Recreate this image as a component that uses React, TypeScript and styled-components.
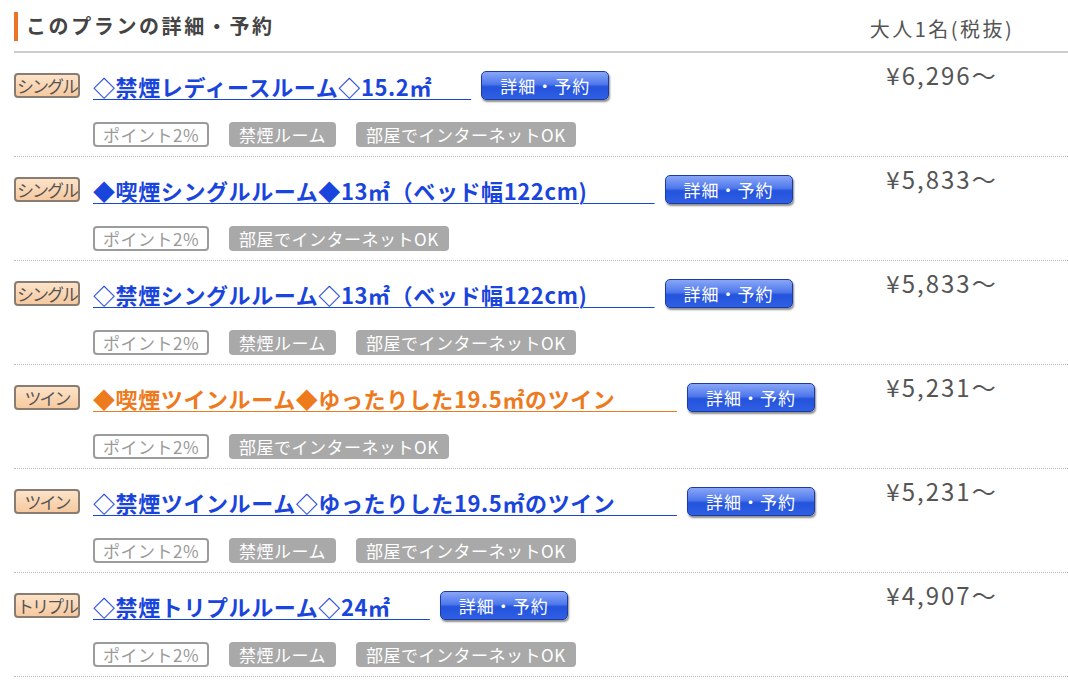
import React from 'react';
import styled, { createGlobalStyle } from 'styled-components';

const GlobalStyle = createGlobalStyle`
	body {
		margin: 0;
		background: #fff;
		font-family: "Noto Sans CJK JP", "Noto Sans", sans-serif;
	}
`;

const Page = styled.div`
	padding-left: 14px;
	width: 1054px;
`;

const Header = styled.div`
	display: flex;
	justify-content: space-between;
	border-bottom: 2px solid #cccccc;
	height: 53px;
	box-sizing: border-box;
`;

const Title = styled.h2`
	margin: 12px 0 0 0;
	height: 29px;
	line-height: 28px;
	border-left: 4px solid #ec7428;
	padding-left: 8px;
	font-size: 20px;
	font-weight: bold;
	letter-spacing: 2.6px;
	color: #444;
`;

const PriceHead = styled.div`
	align-self: flex-end;
	width: 200px;
	margin-right: 26px;
	padding-bottom: 8px;
	text-align: center;
	font-size: 20px;
	color: #555;
	letter-spacing: 2.5px;
`;

const Row = styled.div`
	display: flex;
	justify-content: space-between;
	height: 104px;
	box-sizing: border-box;
	border-bottom: 1px dotted #b8b8b8;
`;

const Main = styled.div`
	display: flex;
	flex-direction: column;
	padding-top: 17px;
	gap: 21px;
`;

const Line = styled.div`
	display: flex;
	align-items: center;
	height: 31px;
`;

const Badge = styled.span`
	width: 66px;
	height: 25px;
	box-sizing: border-box;
	display: flex;
	align-items: center;
	justify-content: center;
	border: 2px solid #8a7c70;
	border-radius: 4px;
	background: linear-gradient(#fde3c8, #f6c9a0);
	color: #555;
	font-size: 17px;
	letter-spacing: -2px;
	margin-right: 13px;
	overflow: hidden;
`;

const PlanLink = styled.a<{ $orange?: boolean }>`
	font-size: 22px;
	font-weight: bold;
	letter-spacing: 0.6px;
	color: ${(p) => (p.$orange ? '#ee7a1e' : '#1a45dc')};
	text-decoration: underline;
	text-underline-offset: 3px;
	text-decoration-thickness: 1px;
	white-space: pre;
	cursor: pointer;
`;

const BookButton = styled.button`
	width: 128px;
	height: 29px;
	margin-left: 10px;
	border: 1px solid #1d3c9e;
	border-radius: 5px;
	background: linear-gradient(#88a6f7 0%, #4f78ec 45%, #2453dc 55%, #2f5fe4 100%);
	box-shadow: 1px 2px 2px rgba(0, 0, 0, 0.45);
	color: #fff;
	font-family: "Noto Sans CJK JP", sans-serif;
	font-size: 17px;
	letter-spacing: 1px;
	padding: 0;
	cursor: pointer;
`;

const Tags = styled.div`
	display: flex;
	gap: 20px;
	padding-left: 79px;
`;

const Tag = styled.span<{ $outline?: boolean }>`
	height: 25px;
	box-sizing: border-box;
	display: flex;
	align-items: center;
	padding: 0 8px;
	border-radius: 4px;
	font-size: 17px;
	letter-spacing: 0.5px;
	border: 2px solid ${(p) => (p.$outline ? '#9c9c9c' : '#a9a9a9')};
	background: ${(p) => (p.$outline ? '#fff' : '#a9a9a9')};
	color: ${(p) => (p.$outline ? '#9a9a9a' : '#fff')};
`;

const Price = styled.div`
	width: 200px;
	margin-right: 26px;
	padding-top: 4px;
	text-align: center;
	font-size: 24px;
	letter-spacing: 2px;
	color: #555;
`;

type Plan = {
	type: string;
	name: string;
	tail: number;
	orange?: boolean;
	nonSmoking: boolean;
	price: string;
};

const plans: Plan[] = [
	{ type: 'シングル', name: '◇禁煙レディースルーム◇15.2㎡', tail: 7, nonSmoking: true, price: '¥6,296〜' },
	{ type: 'シングル', name: '◆喫煙シングルルーム◆13㎡（ベッド幅122cm)', tail: 12, nonSmoking: false, price: '¥5,833〜' },
	{ type: 'シングル', name: '◇禁煙シングルルーム◇13㎡（ベッド幅122cm)', tail: 12, nonSmoking: true, price: '¥5,833〜' },
	{ type: 'ツイン', name: '◆喫煙ツインルーム◆ゆったりした19.5㎡のツイン', tail: 11, orange: true, nonSmoking: false, price: '¥5,231〜' },
	{ type: 'ツイン', name: '◇禁煙ツインルーム◇ゆったりした19.5㎡のツイン', tail: 11, nonSmoking: true, price: '¥5,231〜' },
	{ type: 'トリプル', name: '◇禁煙トリプルルーム◇24㎡', tail: 7, nonSmoking: true, price: '¥4,907〜' },
];

export default function App() {
	return (
		<>
			<GlobalStyle />
			<Page>
				<Header>
					<Title>このプランの詳細・予約</Title>
					<PriceHead>大人1名(税抜)</PriceHead>
				</Header>

				{plans.map((plan, i) => (
					<Row key={i}>
						<Main>
							<Line>
								<Badge>{plan.type}</Badge>
								<PlanLink $orange={plan.orange}>
									{plan.name + '\u00a0'.repeat(plan.tail)}
								</PlanLink>
								<BookButton>詳細・予約</BookButton>
							</Line>
							<Tags>
								<Tag $outline>ポイント2%</Tag>
								{plan.nonSmoking && <Tag>禁煙ルーム</Tag>}
								<Tag>部屋でインターネットOK</Tag>
							</Tags>
						</Main>
						<Price>{plan.price}</Price>
					</Row>
				))}
			</Page>
		</>
	);
}
